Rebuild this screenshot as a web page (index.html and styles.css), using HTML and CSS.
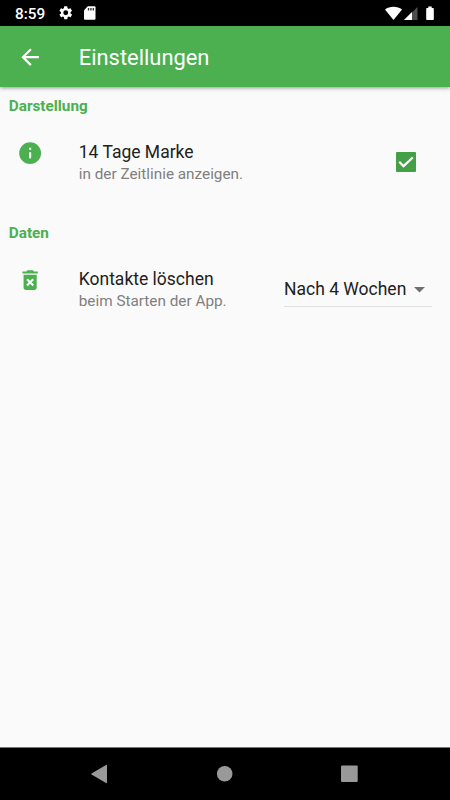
FILE: index.html
```html
<!DOCTYPE html>
<html lang="de">
<head>
<meta charset="utf-8">
<title>Einstellungen</title>
<link rel="stylesheet" href="styles.css">
</head>
<body>
<div class="screen">
  <div class="status">
    <span class="clock">8:59</span>
    <svg class="gear" viewBox="0 0 24 24"><path d="M19.4 13a7.500 7.500 0 0 0 0-2l2.100-1.650a.5.5 0 0 0 .1-.64l-2-3.460a.5.5 0 0 0-.6-.22l-2.500 1a7.300 7.300 0 0 0-1.700-1l-.4-2.650A.5.5 0 0 0 14 2h-4a.5.5 0 0 0-.5.42l-.4 2.650a7.700 7.700 0 0 0-1.700 1l-2.500-1a.5.5 0 0 0-.6.22l-2 3.460a.5.5 0 0 0 .1.640L4.600 11a7.500 7.500 0 0 0 0 2l-2.100 1.650a.5.5 0 0 0-.1.640l2 3.460a.5.5 0 0 0 .6.220l2.500-1a7.300 7.300 0 0 0 1.700 1l.4 2.650a.5.5 0 0 0 .4.380h4a.5.5 0 0 0 .5-.42l.4-2.650a7.700 7.700 0 0 0 1.700-1l2.500 1a.5.5 0 0 0 .6-.22l2-3.460a.5.5 0 0 0-.1-.64zM12 15.800a3.800 3.800 0 1 1 0-7.600 3.800 3.800 0 0 1 0 7.600z"/></svg>
    <svg class="sd" viewBox="0 0 12 14"><path d="M4 0h7a1 1 0 0 1 1 1v12a1 1 0 0 1-1 1H1a1 1 0 0 1-1-1V4z"/><path class="slots" d="M4 1.800h1.400v2.500H4zM6.500 1.800h1.400v2.500H6.500zM9 1.800h1.400v2.500H9z"/></svg>
    <svg class="signals" viewBox="0 0 50 16"><path d="M0 3.600C4.500-.2 12.500-.2 17 3.600L8.500 14z"/><path class="dim" d="M32.500 1v13H19z"/><path d="M27 6v8H19z"/><path d="M43.300 .6h3.400v1.400h1.300q.8 0 .8.800v10.400q0 .8-.8.800h-6q-.8 0-.8-.8V2.800q0-.8.8-.8h1.300z"/></svg>
  </div>
  <header class="appbar">
    <svg class="icon" viewBox="0 0 24 24"><path d="M20 11H7.830l5.590-5.590L12 4l-8 8 8 8 1.410-1.410L7.830 13H20z"/></svg>
    <h1>Einstellungen</h1>
  </header>
  <main>
    <h2>Darstellung</h2>
    <section class="row">
      <svg class="icon" viewBox="0 0 24 24"><path d="M12 2a10 10 0 1 0 0 20 10 10 0 0 0 0-20zm0 15a1 1 0 0 1-1-1v-4a1 1 0 0 1 2 0v4a1 1 0 0 1-1 1zm1-8h-2V7h2z"/></svg>
      <div class="label"><div class="name">14 Tage Marke</div><div class="hint">in der Zeitlinie anzeigen.</div></div>
      <svg class="check" viewBox="0 0 20 20"><rect width="20" height="20" rx="1"/><path d="M3.200 9.800l4.300 4.300 9.300-8.600"/></svg>
    </section>
    <h2>Daten</h2>
    <section class="row">
      <svg class="icon" viewBox="0 0 24 24"><path d="M6 19c0 1.100.9 2 2 2h8c1.100 0 2-.9 2-2V7H6zm2.460-7.120l1.410-1.410L12 12.590l2.120-2.120 1.410 1.410L13.410 14l2.120 2.120-1.410 1.410L12 15.410l-2.120 2.120-1.410-1.410L10.590 14zM15.500 4l-1-1h-5l-1 1H5v2h14V4z"/></svg>
      <div class="label"><div class="name">Kontakte löschen</div><div class="hint">beim Starten der App.</div></div>
      <div class="select"><span>Nach 4 Wochen</span><svg viewBox="0 0 11 6"><path d="M0 0h11L5.500 5.500z"/></svg></div>
    </section>
  </main>
  <nav>
    <svg viewBox="0 0 450 52"><path d="M91.500 25.600L106 17q1-.5 1 .5v17q0 1-1 .5L91.500 26.400q-.7-.4 0-.8z"/><circle cx="224.700" cy="25.700" r="7.800"/><rect x="341" y="17.500" width="16.700" height="16.500" rx="1"/></svg>
  </nav>
</div>
</body>
</html>
```
FILE: styles.css
```css
* { box-sizing: border-box; margin: 0; }
body { font-family: Roboto, sans-serif; background: #fafafa; }
svg { display: block; flex: none; }
.screen { width: 450px; height: 800px; display: flex; flex-direction: column; overflow: hidden; }
.status { height: 26px; background: #000; color: #fff; fill: #fff; display: flex; align-items: center; padding: 0 15px 0 15px; }
.clock { font-size: 15.3px; font-weight: 500; line-height: 26px; width: 43px; padding-top: 2px; }
.gear { width: 15.500px; height: 15.500px; }
.sd { width: 11.500px; height: 14px; margin-left: 10.500px; }
.slots { fill: #333; }
.signals { width: 50px; height: 16px; margin-left: auto; margin-top: 1px; }
.dim { fill: #4d4d4d; }
.appbar { height: 61px; background: #4caf50; color: #fff; fill: #fff; display: flex; align-items: center; padding-left: 17.500px; box-shadow: 0 1px 4px rgba(0,0,0,.4); z-index: 1; }
.icon { width: 26.250px; height: 26.250px; margin-left: -.4px; }
.appbar .icon { margin-top: 1px; }
h1 { font-size: 21.900px; font-weight: 400; line-height: 26px; margin: 2px 0 0 35.400px; }
main { flex: 1; }
h2 { font-size: 15.300px; line-height: 18px; font-weight: 700; color: #4caf50; padding: 10px 0 0 8.750px; height: 27px; }
.row { height: 100px; display: flex; align-items: flex-start; padding: 26px 18px 0 17.500px; fill: #4caf50; }
.label { margin-left: 35.400px; flex: 1; padding-top: 1px; }
.name { font-size: 17.500px; line-height: 22px; color: #212121; }
.hint { font-size: 15.300px; line-height: 22px; color: #808080; }
.check { width: 20px; height: 20px; margin: 12px 16px 0 0; fill: #43a047; }
.check path { fill: none; stroke: #fff; stroke-width: 2.200; }
.select { width: 148px; height: 40px; padding-top: 11px; border-bottom: 1px solid #e0e0e0; display: flex; color: #212121; font-size: 17.500px; line-height: 22px; }
.select svg { width: 11px; height: 6px; margin: 9px 7px 0 auto; fill: #707070; }
nav { height: 53px; background: #000; border-top: 1px solid #777; fill: #999; }
nav svg { width: 450px; height: 52px; }
```
